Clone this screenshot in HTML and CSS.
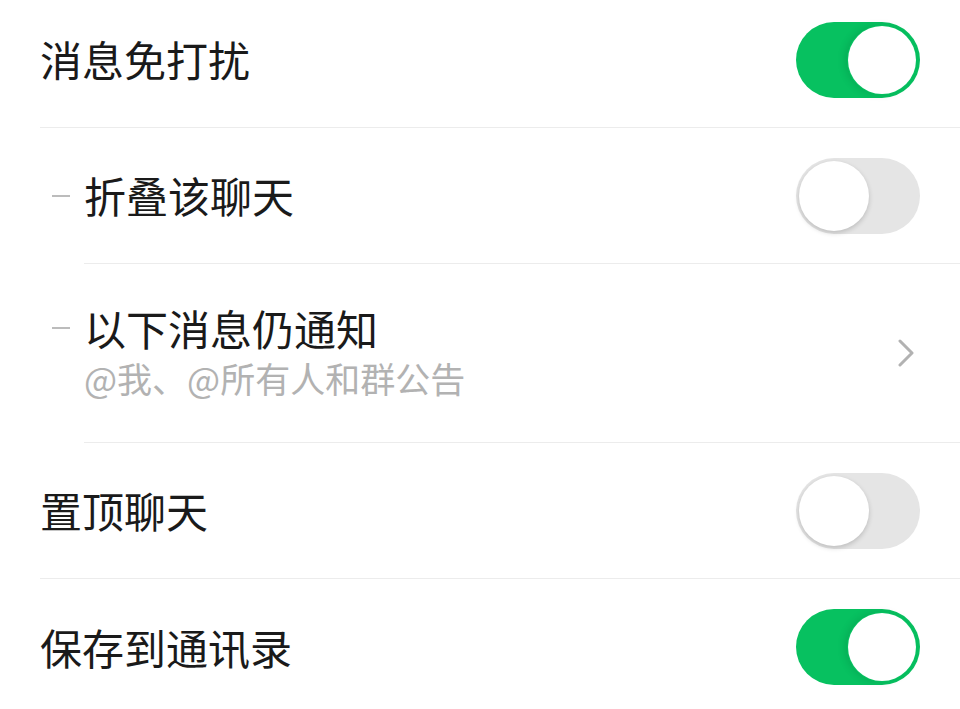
FILE: index.html
```html
<!DOCTYPE html>
<html lang="zh-CN">
<head>
  <meta charset="UTF-8">
  <meta name="viewport" content="width=device-width, initial-scale=1.0">
  <title>聊天信息</title>
  <link rel="stylesheet" href="styles.css">
</head>
<body>
  <div class="list">
    <div class="cell">
      <div class="cell-inner">
        <div class="cell-title">消息免打扰</div>
        <div class="switch on"></div>
      </div>
    </div>

    <div class="cell sub">
      <span class="dash"></span>
      <div class="cell-inner">
        <div class="cell-title">折叠该聊天</div>
        <div class="switch"></div>
      </div>
    </div>

    <div class="cell sub tall">
      <span class="dash"></span>
      <div class="cell-inner">
        <div class="cell-body">
          <div class="cell-title">以下消息仍通知</div>
          <div class="cell-desc">@我、@所有人和群公告</div>
        </div>
        <svg class="arrow" viewBox="0 0 16 28"><path d="M2 2l12 12L2 26"/></svg>
      </div>
    </div>

    <div class="cell">
      <div class="cell-inner">
        <div class="cell-title">置顶聊天</div>
        <div class="switch"></div>
      </div>
    </div>

    <div class="cell">
      <div class="cell-inner">
        <div class="cell-title">保存到通讯录</div>
        <div class="switch on"></div>
      </div>
    </div>
  </div>
</body>
</html>
```

FILE: styles.css
```css
* { box-sizing: border-box; margin: 0; padding: 0; }
body {
  background-color: #fff;
  font-family: "Noto Sans CJK SC", "Noto Sans", sans-serif;
  color: #1a1a1a;
  overflow: hidden;
}
.list {
  margin-top: -8px;
}

.cell {
  display: flex;
  align-items: stretch;
  height: 136px;
  padding-left: 40px;
}
.cell.sub { padding-left: 52px; }
.cell.tall { height: 179px; }
.cell:last-child .cell-inner { border-bottom: none; }

.dash {
  flex-shrink: 0;
  align-self: center;
  width: 18px;
  height: 2px;
  margin-right: 14px;
  background-color: #bcbcbc;
}
.cell.tall .dash { align-self: flex-start; margin-top: 63px; }

.cell-inner {
  flex: 1;
  display: flex;
  align-items: center;
  justify-content: space-between;
  padding-right: 40px;
  border-bottom: 1px solid #ececec;
}
.cell-title {
  font-size: 42px;
  line-height: 1.2;
}
.cell-body { margin-top: -2px; }
.cell-desc {
  margin-top: 2px;
  font-size: 35px;
  line-height: 1.3;
  color: #b2b2b2;
}

.arrow {
  width: 16px;
  height: 28px;
  margin-right: 6px;
  fill: none;
  stroke: #b2b2b2;
  stroke-width: 3;
  stroke-linecap: round;
  stroke-linejoin: round;
}

/* Switch */
.switch {
  position: relative;
  flex-shrink: 0;
  width: 124px;
  height: 76px;
  border-radius: 38px;
  background-color: #e5e5e5;
}
.switch::after {
  content: "";
  position: absolute;
  top: 3px;
  left: 3px;
  width: 70px;
  height: 70px;
  border-radius: 50%;
  background-color: #fff;
  box-shadow: 0 2px 5px rgba(0,0,0,0.18);
}
.switch.on { background-color: #07c160; }
.switch.on::after {
  left: auto;
  width: 68px;
  height: 68px;
  top: 4px;
  right: 4px;
  box-shadow: 0 0 0 1px #07c160, -3px 0 8px rgba(0,0,0,0.12);
}
```
